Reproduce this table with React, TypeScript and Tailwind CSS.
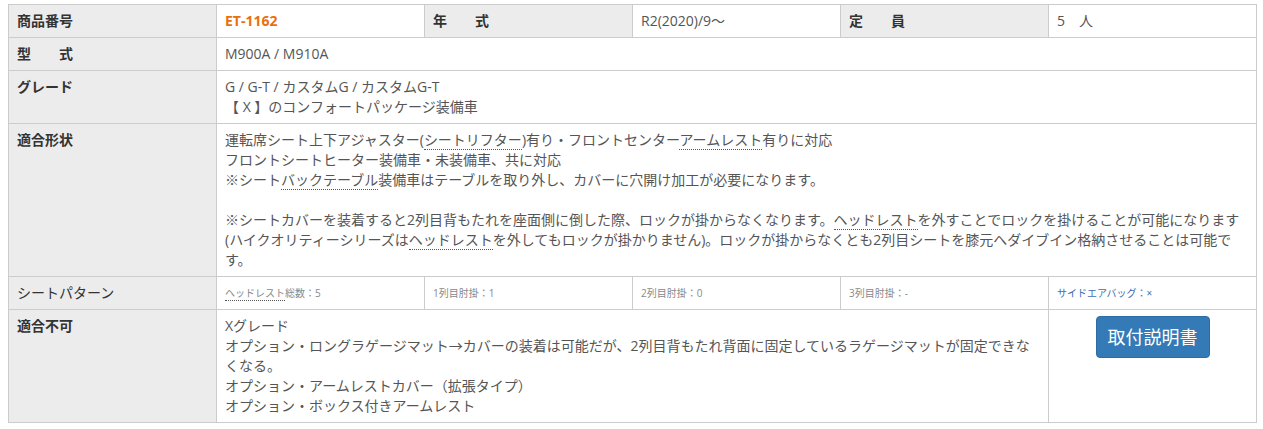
import React from "react";

const cell = "border border-[#cccccc] px-2 py-[6px] align-top";
const th = `${cell} text-left bg-[#ececec] font-bold text-[#333333]`;
const td = `${cell} text-left bg-white text-[#555555]`;
const small = `${cell} text-left bg-white text-[#888888] text-[10px]`;

function Dot({ children }: { children: React.ReactNode }) {
  return <span className="border-b border-dotted border-[#555555]">{children}</span>;
}

export default function App() {
  return (
    <div
      className="bg-white px-2 pt-1 pb-2 text-[14px] leading-5"
      style={{ fontFamily: '"Open Sans", "Noto Sans CJK JP", sans-serif' }}
    >
      <table className="w-[1249px] table-fixed border-collapse">
        <colgroup>
          <col className="w-[208px]" />
          <col className="w-[208px]" />
          <col className="w-[208px]" />
          <col className="w-[208px]" />
          <col className="w-[208px]" />
          <col className="w-[208px]" />
        </colgroup>
        <tbody>
          <tr>
            <th className={th}>商品番号</th>
            <td className={`${td} font-bold`}>
              <span className="text-[#e8700f]">ET-1162</span>
            </td>
            <th className={th}>年　　式</th>
            <td className={td}>R2(2020)/9～</td>
            <th className={th}>定　　員</th>
            <td className={td}>5　人</td>
          </tr>
          <tr>
            <th className={th}>型　　式</th>
            <td className={td} colSpan={5}>
              M900A / M910A
            </td>
          </tr>
          <tr>
            <th className={th}>グレード</th>
            <td className={td} colSpan={5}>
              G / G-T / カスタムG / カスタムG-T
              <br />
              【 X 】のコンフォートパッケージ装備車
            </td>
          </tr>
          <tr>
            <th className={th}>適合形状</th>
            <td className={td} colSpan={5}>
              運転席シート上下アジャスター(<Dot>シートリフター</Dot>)有り・フロントセンター
              <Dot>アームレスト</Dot>有りに対応
              <br />
              フロントシートヒーター装備車・未装備車、共に対応
              <br />
              ※シート<Dot>バックテーブル</Dot>装備車はテーブルを取り外し、カバーに穴開け加工が必要になります。
              <br />
              <br />
              ※シートカバーを装着すると2列目背もたれを座面側に倒した際、ロックが掛からなくなります。
              <Dot>ヘッドレスト</Dot>を外すことでロックを掛けることが可能になります
              <br />
              (ハイクオリティーシリーズは<Dot>ヘッドレスト</Dot>
              を外してもロックが掛かりません)。ロックが掛からなくとも2列目シートを膝元へダイブイン格納させることは可能で
              <br />
              す。
            </td>
          </tr>
          <tr>
            <th className={`${cell} text-left bg-[#ececec] font-normal text-[#333333]`}>シートパターン</th>
            <td className={small}>
              <Dot>ヘッドレスト</Dot>総数：5
            </td>
            <td className={small}>1列目肘掛：1</td>
            <td className={small}>2列目肘掛：0</td>
            <td className={small}>3列目肘掛：-</td>
            <td className={`${cell} text-left bg-white text-[#3b6db3] text-[10px]`}>サイドエアバッグ：×</td>
          </tr>
          <tr>
            <th className={th}>適合不可</th>
            <td className={td} colSpan={4}>
              Xグレード
              <br />
              オプション・ロングラゲージマット→カバーの装着は可能だが、2列目背もたれ背面に固定しているラゲージマットが固定できな
              <br />
              くなる。
              <br />
              オプション・アームレストカバー（拡張タイプ）
              <br />
              オプション・ボックス付きアームレスト
            </td>
            <td className={`${cell} text-center bg-white`}>
              <button className="inline-block rounded border border-[#2e6da4] bg-[#337ab7] px-[11px] py-2 text-[18px] leading-6 text-white">
                取付説明書
              </button>
            </td>
          </tr>
        </tbody>
      </table>
    </div>
  );
}
